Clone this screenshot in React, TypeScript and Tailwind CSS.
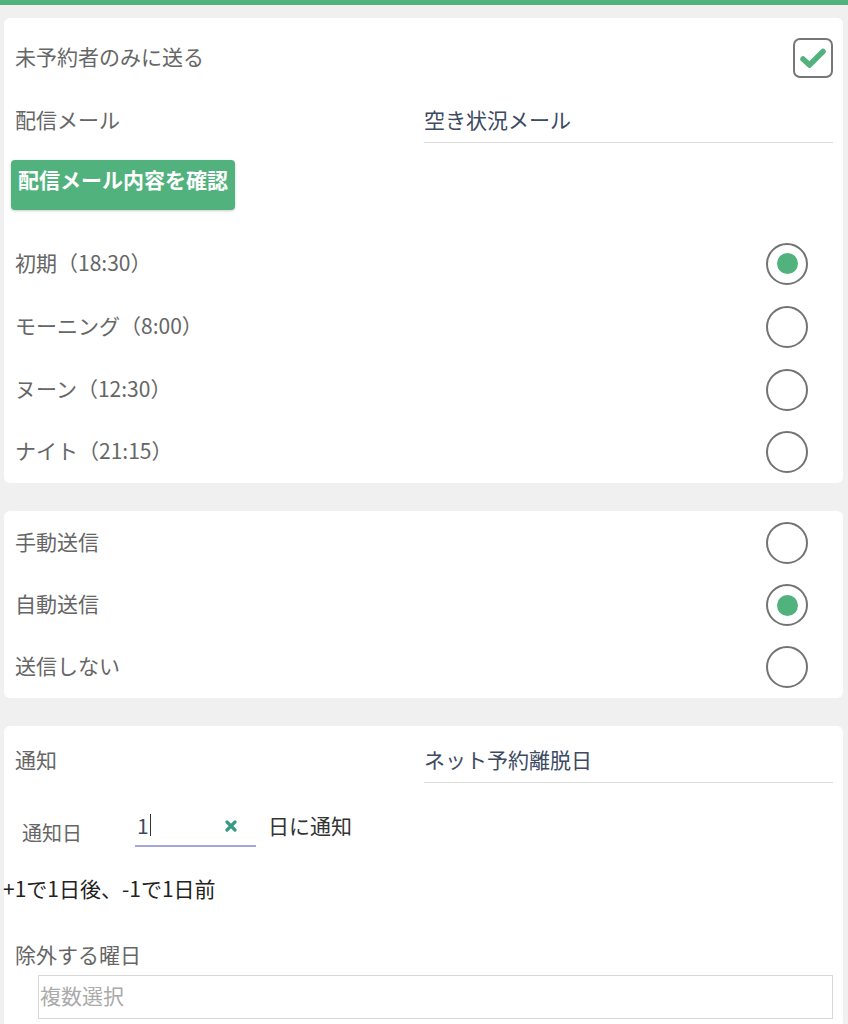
import React from "react";

const font = { fontFamily: '"Noto Sans CJK JP", "Noto Sans", sans-serif' };

function Radio({ checked }: { checked?: boolean }) {
  return (
    <div className="mr-[25px] flex h-[42px] w-[42px] items-center justify-center rounded-full border-2 border-[#737373] bg-white">
      {checked && <div className="h-[21px] w-[21px] rounded-full bg-[#52b27d]" />}
    </div>
  );
}

function RadioRow({ label, checked, h }: { label: string; checked?: boolean; h: string }) {
  return (
    <div className={`flex items-center justify-between ${h}`}>
      <span className="-mt-[4px] text-[21px] leading-[28px] text-[#666666]">{label}</span>
      <Radio checked={checked} />
    </div>
  );
}

export default function App() {
  return (
    <div style={font} className="min-h-[1024px] bg-[#f0f0f0]">
      <div className="h-[5px] bg-[#52b27d]" />
      <div className="flex flex-col gap-[28px] pl-[4px] pr-[5px] pt-[13px]">
        {/* Card 1 */}
        <div className="rounded-[6px] bg-white pl-[11px] pr-[10px]">
          <div className="flex items-center justify-between pt-[20px]">
            <span className="-mt-[4px] text-[21px] leading-[28px] text-[#666666]">未予約者のみに送る</span>
            <div className="flex h-[40px] w-[40px] items-center justify-center rounded-[7px] border-2 border-[#777777]">
              <svg width="32" height="32" viewBox="0 0 32 32">
                <path d="M6 17 L12.5 23 L26 9.5" fill="none" stroke="#52b27d" strokeWidth="5.5" strokeLinecap="round" strokeLinejoin="round" />
              </svg>
            </div>
          </div>
          <div className="mt-[20px] grid grid-cols-2 items-center">
            <span className="-mt-[4px] text-[21px] leading-[28px] text-[#666666]">配信メール</span>
            <div className="border-b border-[#dcdcdc] pb-[2px] text-[21px] leading-[42px] text-[#3d4a62]">空き状況メール</div>
          </div>
          <button className="-ml-[4px] mt-[17px] flex h-[50px] w-[224px] items-start justify-center rounded-[4px] bg-[#52b27d] pt-[5px] text-[21px] font-bold leading-[28px] text-white shadow-[0_1px_3px_rgba(0,0,0,0.2)]">
            配信メール内容を確認
          </button>
          <div className="mt-[22px]">
            <RadioRow label="初期（18:30）" checked h="h-[63px]" />
            <RadioRow label="モーニング（8:00）" h="h-[63px]" />
            <RadioRow label="ヌーン（12:30）" h="h-[63px]" />
            <RadioRow label="ナイト（21:15）" h="h-[62px]" />
          </div>
        </div>

        {/* Card 2 */}
        <div className="rounded-[6px] bg-white pl-[11px] pr-[10px] pt-[1px]">
          <RadioRow label="手動送信" h="h-[62px]" />
          <RadioRow label="自動送信" checked h="h-[62px]" />
          <RadioRow label="送信しない" h="h-[62px]" />
        </div>

        {/* Card 3 */}
        <div className="rounded-[6px] bg-white pb-[10px] pl-[11px] pr-[10px] pt-[12px]">
          <div className="grid grid-cols-2 items-center">
            <span className="-mt-[4px] text-[21px] leading-[28px] text-[#666666]">通知</span>
            <div className="border-b border-[#dcdcdc] pb-[2px] text-[21px] leading-[42px] text-[#3d4a62]">ネット予約離脱日</div>
          </div>
          <div className="mt-[24px] flex h-[40px]">
            <span className="w-[120px] self-end pb-[2px] pl-[7px] text-[20px] leading-[24px] text-[#666666]">通知日</span>
            <div className="flex h-[40px] w-[121px] items-start justify-between border-b-2 border-[#a5a7dc] pl-[2px] pr-[19px]">
              <span className="flex items-center text-[21px] leading-[36px] text-[#3d4a62]">
                1<span className="ml-[1px] inline-block h-[22px] w-[1.5px] bg-[#333]" />
              </span>
              <svg className="mt-[13px]" width="12" height="12" viewBox="0 0 12 12">
                <path d="M2 2 L10 10 M10 2 L2 10" stroke="#3a9a85" strokeWidth="3.2" strokeLinecap="round" />
              </svg>
            </div>
            <span className="ml-[12px] text-[21px] leading-[36px] text-[#333333]">日に通知</span>
          </div>
          <div className="-ml-[12px] mt-[27px] text-[21px] leading-[28px] text-[#222222]">+1で1日後、-1で1日前</div>
          <div className="mt-[38px] text-[21px] leading-[28px] text-[#666666]">除外する曜日</div>
          <div className="ml-[23px] mt-[7px] flex h-[44px] items-center border border-[#d8d8d8] pb-[3px] pl-[1px] text-[21px] text-[#aaaaaa]">
            複数選択
          </div>
        </div>
      </div>
    </div>
  );
}
